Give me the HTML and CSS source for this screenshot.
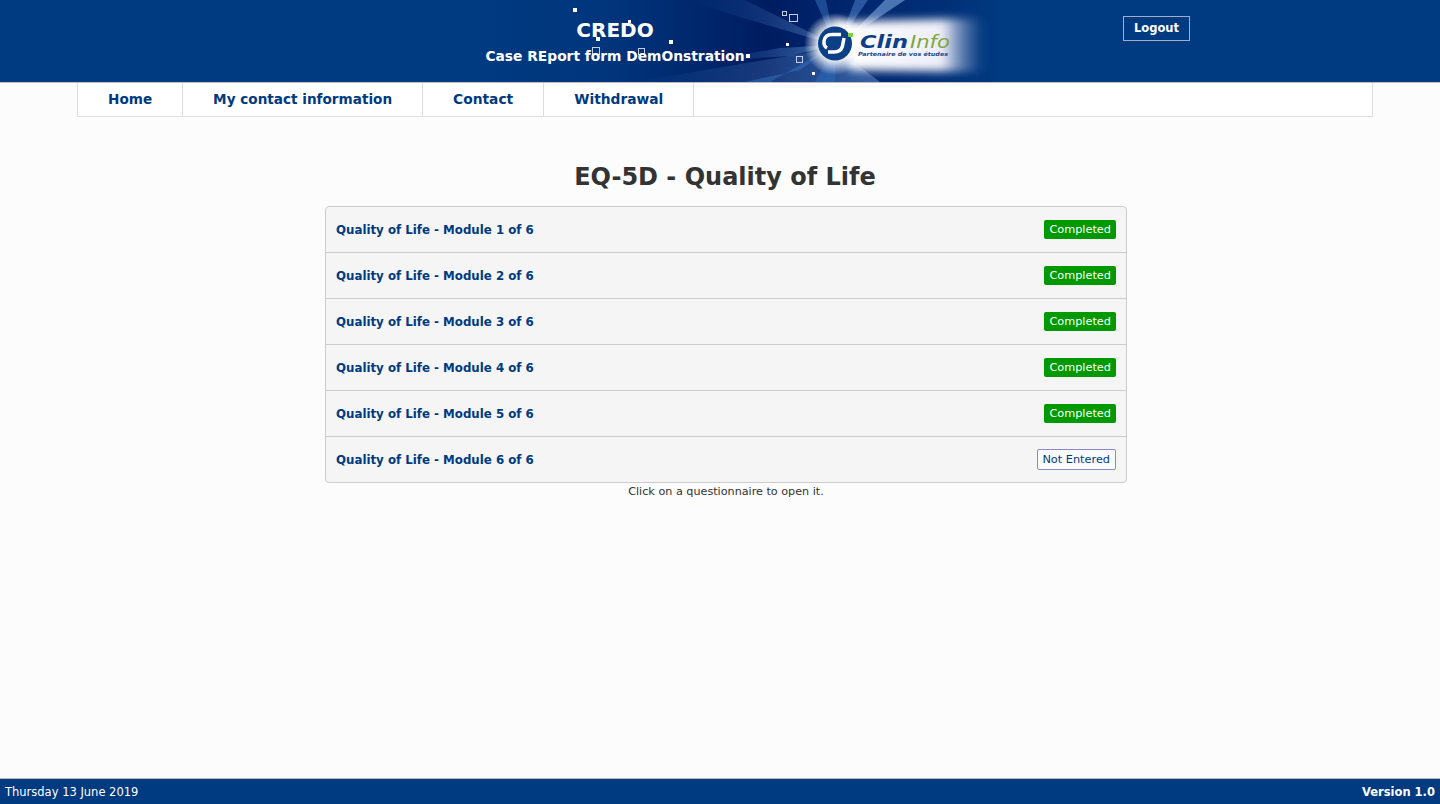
FILE: index.html
```html
<!DOCTYPE html>
<html>
	<head>
		<meta charset="utf-8">
		<title>CREDO</title>
		<link rel="stylesheet" href="styles.css">
	</head>
	<body>
		<header class="header">
			<svg class="banner" viewBox="480 0 520 82" width="520" height="82" aria-hidden="true">
				<defs>
					<linearGradient id="sky" x1="0" x2="1" y1="0" y2="0">
						<stop offset="0" stop-color="#003a80"/>
						<stop offset="0.25" stop-color="#00357c"/>
						<stop offset="0.55" stop-color="#001c60"/>
						<stop offset="0.64" stop-color="#00226a"/>
						<stop offset="0.9" stop-color="#003078"/>
						<stop offset="1" stop-color="#003a80"/>
					</linearGradient>
					<linearGradient id="floor" x1="0" x2="1" y1="0" y2="0">
						<stop offset="0" stop-color="#3a6cae" stop-opacity="0"/>
						<stop offset="1" stop-color="#5c86c4" stop-opacity="0.6"/>
					</linearGradient>
					<linearGradient id="ray" x1="1" x2="0" y1="0" y2="0">
						<stop offset="0" stop-color="#8fc0f0" stop-opacity="0.9"/>
						<stop offset="1" stop-color="#2a70c0" stop-opacity="0"/>
					</linearGradient>
					<radialGradient id="core" cx="0.5" cy="0.5" r="0.5">
						<stop offset="0" stop-color="#ffffff"/>
						<stop offset="0.55" stop-color="#ffffff" stop-opacity="0.85"/>
						<stop offset="1" stop-color="#ffffff" stop-opacity="0"/>
					</radialGradient>
					<linearGradient id="glow" x1="0" x2="1" y1="0" y2="0">
						<stop offset="0" stop-color="#ffffff"/>
						<stop offset="0.72" stop-color="#eeeef8"/>
						<stop offset="1" stop-color="#6f8fc4" stop-opacity="0"/>
					</linearGradient>
					<filter id="soft" x="-20%" y="-40%" width="140%" height="180%">
						<feGaussianBlur stdDeviation="4"/>
					</filter>
				</defs>
				<rect x="480" width="520" height="82" fill="url(#sky)"/>
				<polygon points="635,82 835,48 880,82" fill="url(#floor)"/>
				<polygon points="835,45 730,14 690,0 745,0" fill="url(#ray)" opacity="0.4"/>
				<polygon points="835,45 800,70 745,82 770,82" fill="#3b7dd0" opacity="0.4"/>
				<polygon points="835,45 780,48 700,62 790,56" fill="url(#ray)" opacity="0.5"/>
				<polygon points="835,45 815,82 835,82" fill="#2d6ec0" opacity="0.45"/>
				<polygon points="840,40 855,0 868,0" fill="#5c93d6" opacity="0.45"/>
				<polygon points="845,40 885,0 905,0" fill="#7ba6de" opacity="0.6"/>
				<polygon points="835,45 815,0 826,0" fill="#3d7cc8" opacity="0.45"/>
				<polygon points="832,22 985,18 985,72 850,70" fill="url(#glow)" filter="url(#soft)"/>
				<circle cx="835" cy="44" r="31" fill="url(#core)"/>

				<g fill="#ffffff">
					<rect x="573" y="8" width="4" height="4"/>
					<rect x="596" y="37" width="4" height="4"/>
					<rect x="669" y="40" width="4" height="4"/>
					<rect x="746" y="54" width="4" height="4"/>
					<rect x="786" y="43" width="3" height="3"/>
					<rect x="812" y="72" width="3" height="3"/>
					<rect x="628" y="20" width="3" height="3"/>
				</g>
				<g fill="none" stroke="#c3cfe4">
					<rect x="782.500" y="11.500" width="4" height="4"/>
					<rect x="789.500" y="14.500" width="8" height="7"/>
					<rect x="796.500" y="56.500" width="6" height="6"/>
					<rect x="592.500" y="47.500" width="7" height="7"/>
					<rect x="638.500" y="48.500" width="6" height="6"/>
				</g>

				<circle cx="835" cy="43.500" r="17" fill="#0b3f86"/>
				<path d="M841 34.500 H832 Q825 34.500 824 41 Q823.500 46 827 48" fill="none" stroke="#ffffff" stroke-width="3.500"/>
				<path d="M844 38 L842.500 46 Q841 52 834 52 H828" fill="none" stroke="#ffffff" stroke-width="3.500"/>
				<rect x="848" y="33" width="5" height="4" fill="#7ed13c"/>
				<text class="logo-clin" x="860" y="48" textLength="48" lengthAdjust="spacingAndGlyphs">Clin</text>
				<text class="logo-info" x="910" y="48" textLength="40" lengthAdjust="spacingAndGlyphs">Info</text>
				<text class="logo-tag" x="858" y="56" textLength="90" lengthAdjust="spacingAndGlyphs">Partenaire de vos études</text>
			</svg>

			<div class="brand">
				<div class="brand-name">CREDO</div>
				<div class="brand-sub">Case REport form DemOnstration</div>
			</div>
			<a href="#" class="logout">Logout</a>
		</header>

		<nav class="nav">
			<a href="#" class="nav-item">Home</a>
			<a href="#" class="nav-item">My contact information</a>
			<a href="#" class="nav-item">Contact</a>
			<a href="#" class="nav-item">Withdrawal</a>
		</nav>

		<main class="main">
			<h1 class="title">EQ-5D - Quality of Life</h1>
			<div class="list">
				<a href="#" class="row"><span>Quality of Life - Module 1 of 6</span><span class="badge done">Completed</span></a>
				<a href="#" class="row"><span>Quality of Life - Module 2 of 6</span><span class="badge done">Completed</span></a>
				<a href="#" class="row"><span>Quality of Life - Module 3 of 6</span><span class="badge done">Completed</span></a>
				<a href="#" class="row"><span>Quality of Life - Module 4 of 6</span><span class="badge done">Completed</span></a>
				<a href="#" class="row"><span>Quality of Life - Module 5 of 6</span><span class="badge done">Completed</span></a>
				<a href="#" class="row"><span>Quality of Life - Module 6 of 6</span><span class="badge todo">Not Entered</span></a>
			</div>
			<p class="hint">Click on a questionnaire to open it.</p>
		</main>

		<footer class="footer">
			<span>Thursday 13 June 2019</span>
			<b>Version 1.0</b>
		</footer>
	</body>
</html>
```

FILE: styles.css
```css
html, body {
	height: 100%;
}
body {
	margin: 0;
	display: flex;
	flex-direction: column;
	overflow: hidden;
	font-family: "DejaVu Sans", Verdana, sans-serif;
	color: #333;
	background: #fcfcfc;
}
a {
	text-decoration: none;
}

.header {
	position: relative;
	display: flex;
	align-items: flex-start;
	height: 82px;
	flex-shrink: 0;
	background: #003a80;
	border-bottom: 1px solid #bbb;
}
.banner {
	position: absolute;
	left: 480px;
	top: 0;
}
.logo-clin {
	font: italic bold 17px "DejaVu Sans", sans-serif;
	fill: #0b3f86;
}
.logo-info {
	font: italic 17px "DejaVu Sans", sans-serif;
	fill: #7ea63c;
}
.logo-tag {
	font: italic bold 5.500px "DejaVu Sans", sans-serif;
	fill: #1c4a8c;
}
.brand {
	position: relative;
	width: 260px;
	margin-left: 485px;
	padding-top: 18px;
	color: #fff;
	font-weight: bold;
	text-align: center;
	white-space: nowrap;
}
.brand-name {
	font-size: 20px;
	line-height: 24px;
}
.brand-sub {
	margin-top: 4px;
	font-size: 13.800px;
	line-height: 20px;
}
.logout {
	position: relative;
	margin: 16px 0 0 378px;
	width: 65px;
	height: 23px;
	border: 1px solid #a0aec8;
	color: #fff;
	font-size: 11.500px;
	font-weight: bold;
	line-height: 23px;
	text-align: center;
}

.nav {
	display: flex;
	flex-shrink: 0;
	width: 1294px;
	height: 33px;
	margin-left: 77px;
	background: #fff;
	border: 1px solid #ddd;
	border-top: 0;
}
.nav-item {
	padding: 0 30px;
	border-right: 1px solid #ddd;
	color: #003a80;
	font-size: 13.600px;
	font-weight: bold;
	line-height: 32px;
}
.nav-item + .nav-item + .nav-item {
	font-size: 13.800px;
}

.main {
	flex: 1;
	width: 1298px;
	margin-left: 77px;
}
.title {
	margin: 43px 0 12px;
	padding-right: 2px;
	font-size: 24px;
	line-height: 34px;
	text-align: center;
	color: #333;
}
.list {
	width: 800px;
	margin: 0 auto;
	background: #f5f5f5;
	border: 1px solid #ccc;
	border-radius: 4px;
}
.row {
	display: flex;
	align-items: center;
	justify-content: space-between;
	height: 45px;
	padding: 0 10px;
	border-bottom: 1px solid #ccc;
	color: #003a80;
	font-size: 11.800px;
	font-weight: bold;
}
.row:last-child {
	border-bottom: 0;
}
.badge {
	padding: 1px 5px 0;
	border-radius: 2px;
	font-size: 11.300px;
	font-weight: normal;
	line-height: 18px;
}
.done {
	background: #090;
	color: #fff;
}
.todo {
	padding: 1px 5px 0 4px;
	background: #fafafa;
	border: 1px solid #8a8ac8;
	color: #003a80;
}
.hint {
	margin: 2px 0 0;
	font-size: 11.200px;
	line-height: 14px;
	text-align: center;
	color: #333;
}

.footer {
	display: flex;
	justify-content: space-between;
	align-items: center;
	flex-shrink: 0;
	height: 25px;
	padding: 0 5px;
	background: #003a80;
	border-top: 1px solid #bbb;
	color: #fff;
	font-size: 11.500px;
}
```
